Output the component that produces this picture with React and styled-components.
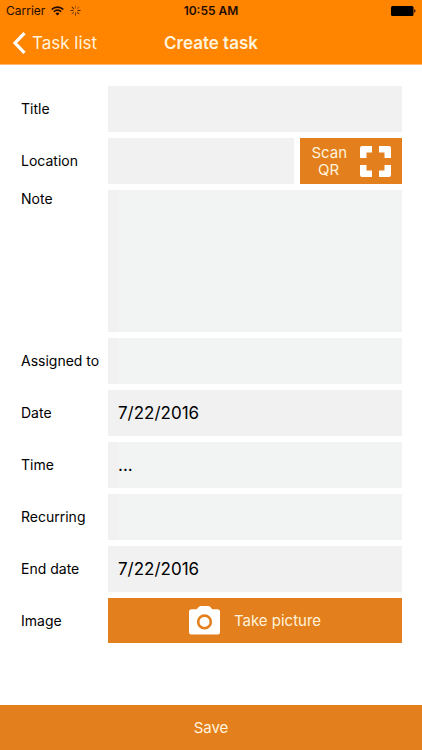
import React from "react";
import styled, { createGlobalStyle } from "styled-components";

const GlobalStyle = createGlobalStyle`
  *, *::before, *::after { box-sizing: border-box; }
  body { margin: 0; background: #fff; }
  body, button, input, select, textarea {
    font-family: Inter, "Liberation Sans", sans-serif;
  }
`;

const Screen = styled.div`
  display: flex;
  flex-direction: column;
  min-height: 100vh;
  color: #000;
`;

const Header = styled.header`
  background: #ff8400;
  border-bottom: 1px solid #ffb574;
`;

const StatusBar = styled.div`
  display: grid;
  grid-template-columns: 1fr auto 1fr;
  align-items: center;
  height: 21px;
  padding: 0 6px;
  font-size: 12px;
  color: #1f0d00;
`;

const Network = styled.div`
  display: flex;
  align-items: center;
  gap: 6px;
`;

const Clock = styled.time`
  font-weight: 600;
`;

const BatteryIcon = styled.svg`
  justify-self: end;
`;

const NavBar = styled.nav`
  display: grid;
  grid-template-columns: 1fr auto 1fr;
  align-items: center;
  height: 43px;
  padding: 0 12px;
`;

const BackLink = styled.a`
  display: flex;
  align-items: center;
  gap: 6px;
  color: #fff3dc;
  font-size: 17px;
  text-decoration: none;
`;

const PageTitle = styled.h1`
  margin: 0;
  color: #fff3dc;
  font-size: 17px;
  font-weight: 600;
`;

const Form = styled.form`
  display: flex;
  flex: 1;
  flex-direction: column;
`;

const Fields = styled.div`
  display: flex;
  flex: 1;
  flex-direction: column;
  gap: 6px;
  padding: 21px 20px 20px 21px;
`;

const Row = styled.div`
  display: grid;
  grid-template-columns: 87px minmax(0, 1fr);
  align-items: ${(p) => (p.$top ? "start" : "center")};
`;

const Label = styled.label`
  font-size: 14px;
  line-height: 18px;
  white-space: nowrap;
`;

const fieldStyle = `
  display: block;
  width: 100%;
  min-width: 0;
  height: 46px;
  margin: 0;
  padding: 0 10px;
  border: 0;
  border-radius: 0;
  outline: 0;
  appearance: none;
  background: #f1f1f1;
  color: #000;
  font-size: 17px;
`;

const TextField = styled.input`
  ${fieldStyle}
`;

const SelectField = styled.select`
  ${fieldStyle}
  border-left: 10px solid #f1f1f1;
  padding-left: 0;
  background: #f2f4f4;
`;

const NoteField = styled.textarea`
  ${fieldStyle}
  height: 142px;
  padding: 10px 10px 10px 0;
  border-left: 10px solid #f1f1f1;
  background: #f2f4f4;
  resize: none;
`;

const FieldWithAction = styled.div`
  display: grid;
  grid-template-columns: minmax(0, 1fr) 102px;
  gap: 6px;
`;

const ActionButton = styled.button`
  display: flex;
  align-items: center;
  justify-content: center;
  gap: 14px;
  width: 100%;
  height: ${(p) => (p.$compact ? "45px" : "46px")};
  padding: 0;
  border: 0;
  background: #e37f1d;
  color: #fff3dc;
  font-size: 15px;
  line-height: 17px;
`;

const ScanText = styled.span`
  width: 34px;
`;

const WifiIcon = () => (
  <svg width="13" height="10" viewBox="0 0 13 10" fill="none" stroke="#1f0d00" aria-hidden="true">
    <path d="M.7 3.5a8.2 8.2 0 0 1 11.6 0" strokeWidth="1.7" />
    <path d="M2.8 5.7a5.2 5.2 0 0 1 7.4 0" strokeWidth="1.6" />
    <path d="M6.5 9.5 4.5 7.4a2.9 2.9 0 0 1 4 0z" fill="#1f0d00" stroke="none" />
  </svg>
);

const spokes = [0.35, 0.4, 0.9, 0.8, 0.7, 0.6, 0.8, 0.9];

const SpinnerIcon = () => (
  <svg width="11" height="11" viewBox="0 0 11 11" stroke="#3a1c00" strokeLinecap="round" aria-hidden="true">
    {spokes.map((opacity, i) => (
      <path key={i} d="M5.5 .8v2.2" strokeOpacity={opacity} transform={`rotate(${i * 45} 5.5 5.5)`} />
    ))}
  </svg>
);

const Battery = () => (
  <BatteryIcon width="25" height="10" viewBox="0 0 25 10" aria-hidden="true">
    <rect width="22.5" height="10" rx="1.5" />
    <path d="M23.3 3.3c1.6.3 1.6 3.1 0 3.4z" />
  </BatteryIcon>
);

const BackIcon = () => (
  <svg width="14" height="22" viewBox="0 0 14 22" fill="none" stroke="#fff" strokeWidth="3.2" aria-hidden="true">
    <path d="M12.5 1.2 3 11l9.5 9.8" />
  </svg>
);

const ScanIcon = () => (
  <svg width="31" height="31" viewBox="0 0 31 31" fill="#fff" aria-hidden="true">
    {[0, 90, 180, 270].map((angle) => (
      <path
        key={angle}
        d="M2 0H12V6.5H6.5V12H0V2Q0 0 2 0Z"
        transform={`rotate(${angle} 15.5 15.5)`}
      />
    ))}
  </svg>
);

const CameraIcon = () => (
  <svg width="31" height="29" viewBox="0 0 31 29" aria-hidden="true">
    <path
      fill="#fff"
      d="M2.5 3.3H7.7L9.7 1Q10.5 0 12 0H19Q20.5 0 21.3 1L23.3 3.3H28.5Q31 3.3 31 5.8V26Q31 28.5 28.5 28.5H2.5Q0 28.5 0 26V5.8Q0 3.3 2.5 3.3Z"
    />
    <circle cx="15.5" cy="15.9" r="6.3" fill="#fff" stroke="#e37f1d" strokeWidth="2.6" />
  </svg>
);

export default function App() {
  return (
    <Screen>
      <GlobalStyle />
      <Header>
        <StatusBar>
          <Network>
            <span>Carrier</span>
            <WifiIcon />
            <SpinnerIcon />
          </Network>
          <Clock>10:55 AM</Clock>
          <Battery />
        </StatusBar>
        <NavBar>
          <BackLink href="#tasks">
            <BackIcon />
            Task list
          </BackLink>
          <PageTitle>Create task</PageTitle>
        </NavBar>
      </Header>
      <Form onSubmit={(e) => e.preventDefault()}>
        <Fields>
          <Row>
            <Label htmlFor="title">Title</Label>
            <TextField id="title" />
          </Row>
          <Row>
            <Label htmlFor="location">Location</Label>
            <FieldWithAction>
              <TextField id="location" />
              <ActionButton type="button">
                <ScanText>Scan QR</ScanText>
                <ScanIcon />
              </ActionButton>
            </FieldWithAction>
          </Row>
          <Row $top>
            <Label htmlFor="note">Note</Label>
            <NoteField id="note" />
          </Row>
          <Row>
            <Label htmlFor="assignee">Assigned to</Label>
            <SelectField id="assignee" />
          </Row>
          <Row>
            <Label htmlFor="date">Date</Label>
            <TextField id="date" defaultValue="7/22/2016" />
          </Row>
          <Row>
            <Label htmlFor="time">Time</Label>
            <SelectField id="time">
              <option>...</option>
            </SelectField>
          </Row>
          <Row>
            <Label htmlFor="recurring">Recurring</Label>
            <SelectField id="recurring" />
          </Row>
          <Row>
            <Label htmlFor="end-date">End date</Label>
            <TextField id="end-date" defaultValue="7/22/2016" />
          </Row>
          <Row>
            <Label htmlFor="picture">Image</Label>
            <ActionButton id="picture" type="button" $compact>
              <CameraIcon />
              Take picture
            </ActionButton>
          </Row>
        </Fields>
        <ActionButton type="submit" $compact>Save</ActionButton>
      </Form>
    </Screen>
  );
}
